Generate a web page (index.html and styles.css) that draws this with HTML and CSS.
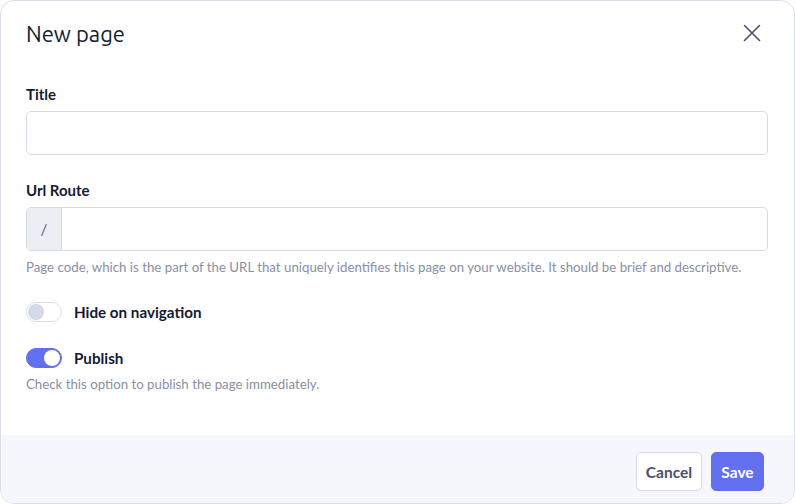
FILE: index.html
```html
<!DOCTYPE html>
<html>
<head>
<meta charset="utf-8">
<link rel="stylesheet" href="styles.css">
</head>
<body>
<div class="dialog">
  <div class="header">
    <h1 class="title">New page</h1>
    <button class="close" aria-label="Close">
      <svg width="18" height="18" viewBox="0 0 18 18"><path d="M1.5 1.5 L16.5 16.5 M16.5 1.5 L1.5 16.5" stroke="#4a5070" stroke-width="1.6" stroke-linecap="round" fill="none"/></svg>
    </button>
  </div>
  <div class="body">
    <div class="field">
      <label class="label">Title</label>
      <div class="input"></div>
    </div>
    <div class="field">
      <label class="label">Url Route</label>
      <div class="input group">
        <span class="prefix">/</span>
        <span class="grow"></span>
      </div>
      <p class="help">Page code, which is the part of the URL that uniquely identifies this page on your website. It should be brief and descriptive.</p>
    </div>
    <div class="toggle-row">
      <span class="switch"><span class="knob"></span></span>
      <span class="toggle-label">Hide on navigation</span>
    </div>
    <div class="toggle-row on-row">
      <span class="switch on"><span class="knob"></span></span>
      <span class="toggle-label">Publish</span>
    </div>
    <p class="help help2">Check this option to publish the page immediately.</p>
  </div>
  <div class="footer">
    <button class="btn cancel">Cancel</button>
    <button class="btn save">Save</button>
  </div>
</div>
</body>
</html>
```
FILE: styles.css
```css
* { box-sizing: border-box; }
html, body { margin: 0; padding: 0; background: #fff; }
body { font-family: "Source Sans Pro", "Lato", "Noto Sans", sans-serif; color: #1c2033; }
.dialog {
  width: 795px; height: 504px;
  border: 1px solid #dcdeea;
  border-radius: 14px;
  overflow: hidden;
  display: flex; flex-direction: column;
  background: #fff;
}
.header {
  display: flex; align-items: center; justify-content: space-between;
  padding: 17px 33px 0 25px;
  height: 47px;
}
.title {
  margin: 0; font-family: "Ubuntu", "Open Sans", sans-serif; font-weight: 400;
  font-size: 22px; color: #141a33; letter-spacing: 0;
}
.close { background: none; border: 0; padding: 0; width: 18px; height: 18px; display: flex; cursor: pointer; }
.body { flex: 1; padding: 37px 26px 0 25px; }
.field { margin-bottom: 26px; }
.label { display: block; font-weight: 700; font-size: 15px; color: #141a33; margin-bottom: 8px; line-height: 18px; }
.input {
  height: 44px; border: 1px solid #d6d9e6; border-radius: 5px; background: #fff;
}
.group { display: flex; overflow: hidden; }
.prefix {
  width: 35px; background: #eceef3; border-right: 1px solid #d6d9e6;
  display: flex; align-items: center; justify-content: center;
  color: #5a5f73; font-size: 15px;
}
.help { margin: 7px 0 0 0; font-size: 13.25px; color: #8a8fa5; line-height: 18px; }
.toggle-row { display: flex; align-items: center; gap: 12px; height: 20px; }
.field + .toggle-row { margin-top: 2px; }
.on-row { margin-top: 26px; }
.switch {
  width: 36px; height: 20px; border-radius: 10px; background: #fff;
  border: 1px solid #dcdeea; position: relative; display: inline-block; flex: none;
}
.knob {
  position: absolute; top: 1px; left: 1px; width: 16px; height: 16px; border-radius: 50%; background: #d5d8e5;
}
.switch.on { background: #6270f0; border-color: #6270f0; }
.switch.on .knob { left: auto; right: 1px; background: #fff; }
.toggle-label { font-weight: 700; font-size: 15.2px; color: #141a33; }
.help2 { margin-top: 7px; }
.footer {
  height: 68px; background: #f6f7fc;
  display: flex; justify-content: flex-end; align-items: center; gap: 9px;
  padding: 5px 30px 0 0;
}
.btn {
  height: 39px; border-radius: 5px; font-family: inherit; font-weight: 700; font-size: 15.5px; padding: 0; cursor: pointer;
}
.cancel { background: #fff; border: 1px solid #d6d9e6; color: #4a5070; width: 66px; }
.save { background: #6270f0; border: 1px solid #6270f0; color: #fff; width: 53px; }
```
